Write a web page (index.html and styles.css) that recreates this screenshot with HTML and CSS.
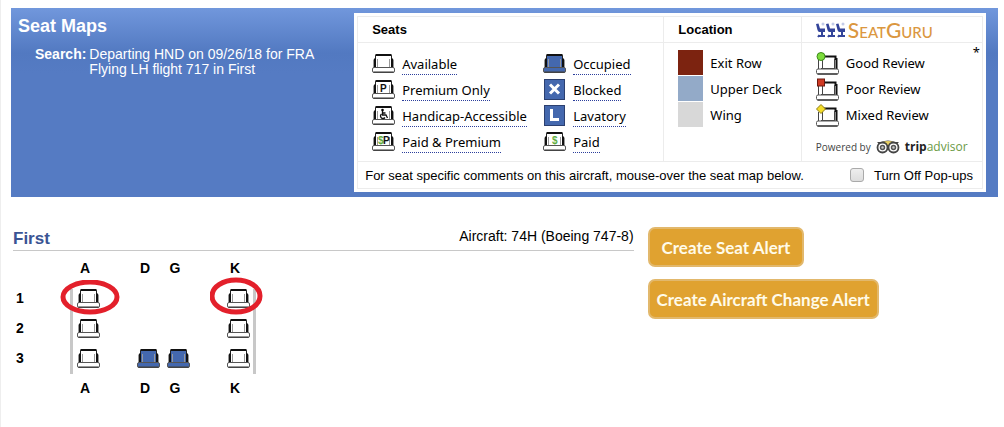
FILE: index.html
```html
<!DOCTYPE html>
<html lang="en">
<head>
  <meta charset="UTF-8">
  <meta name="viewport" content="width=device-width, initial-scale=1.0">
  <title>Seat Maps</title>
  <link rel="stylesheet" href="styles.css">
</head>
<body>
  <!-- shared icons -->
  <svg class="sprite" aria-hidden="true">
    <symbol id="seat" viewBox="0 0 23 19">
      <path d="M4 14V1h15v13z" fill="currentColor"/>
      <path d="M3.500 5V1.500H5M19.500 5V1.500H18" fill="none" stroke="#222"/>
      <path d="M3.500 1h16" stroke="#111" stroke-width="2"/>
      <path d="M5.500 5v8.500M17.500 5v8.500" stroke="#999" fill="none"/>
      <path d="M1.500 14V5.500M21.500 14V5.500" stroke="#999"/>
      <path d="M3 4.500V13M20 4.500V13" stroke="#111" stroke-width="2"/>
      <rect x=".5" y="13.500" width="22" height="5" rx="1.500" fill="currentColor" stroke="#555"/>
      <path d="M1.500 18.200h20" stroke="#444" stroke-width="1.500"/>
    </symbol>
    <symbol id="seat-review" viewBox="0 0 23 23">
      <path d="M5 4.500h14.500V7h1v10" fill="none" stroke="#111" stroke-width="2"/>
      <path d="M2.500 8v9M6.500 8v8.500M18.500 7v9.500M5 16.500h14" fill="none" stroke="#444"/>
      <rect x=".5" y="17" width="22" height="5" rx="1.500" fill="#fff" stroke="#555"/>
      <path d="M1.500 22h20" stroke="#444" stroke-width="1.500"/>
    </symbol>
    <symbol id="lounge-chair" viewBox="0 0 10 16">
      <circle cx="7" cy="2" r="1.500" fill="#c3cbe8"/>
      <path d="M0 2l2.500-.5L4 6.500h5V10H3.500Q2 10 1.500 8z" fill="#34459a"/>
      <path d="M6 9v4M3 14h6M2 15l1.500-2" stroke="#34459a" stroke-width="2" fill="none"/>
    </symbol>
  </svg>

  <div class="page">
    <header class="banner">
      <div class="search">
        <h1>Seat Maps</h1>
        <dl>
          <dt>Search:</dt>
          <dd>Departing HND on 09/26/18 for FRA<br>Flying LH flight 717 in First</dd>
        </dl>
      </div>

      <div class="legend">
        <table>
          <thead>
            <tr>
              <th class="col-seats">Seats</th>
              <th class="col-location">Location</th>
              <th class="col-reviews">
                <div class="seatguru">
                  <svg width="30" height="16" viewBox="0 0 30 16" aria-hidden="true">
                    <use href="#lounge-chair" width="10" height="16"/>
                    <use href="#lounge-chair" x="10" width="10" height="16"/>
                    <use href="#lounge-chair" x="20" width="10" height="16"/>
                  </svg>
                  <span>SeatGuru</span>
                </div>
              </th>
            </tr>
          </thead>
          <tbody>
            <tr>
              <td>
                <div class="seat-types">
                  <ul>
                    <li><svg class="icon"><use href="#seat"/></svg><a href="#available">Available</a></li>
                    <li><svg class="icon"><use href="#seat"/><text x="8" y="12" class="mark">P</text></svg><a href="#premium">Premium Only</a></li>
                    <li>
                      <svg class="icon"><use href="#seat"/>
                        <circle cx="10.500" cy="4" r="1.300"/>
                        <path d="M10.500 5v4h3.500l1.500 3M10.500 7h3M9.500 8a2.500 2.500 0 1 0 3.500 3.500" fill="none" stroke="#111" stroke-width="1.300"/>
                      </svg>
                      <a href="#handicap">Handicap-Accessible</a>
                    </li>
                    <li><svg class="icon"><use href="#seat"/><text x="6" y="12" class="mark paid">$</text><text x="11" y="12" class="mark">P</text></svg><a href="#paid-premium">Paid &amp; Premium</a></li>
                  </ul>
                  <ul>
                    <li><svg class="icon occupied"><use href="#seat"/></svg><a href="#occupied">Occupied</a></li>
                    <li>
                      <svg class="icon tile" viewBox="0 0 23 21"><rect x="1.500" y=".5" width="20" height="20" fill="#4468ae" stroke="#2c4070"/><path d="M7 5.500l9 9M16 5.500l-9 9" stroke="#fff" stroke-width="3"/></svg>
                      <a href="#blocked">Blocked</a>
                    </li>
                    <li>
                      <svg class="icon tile" viewBox="0 0 23 21"><rect x="1.500" y=".5" width="20" height="20" fill="#4468ae" stroke="#2c4070"/><path d="M8.500 4v10.500H16" fill="none" stroke="#fff" stroke-width="3"/></svg>
                      <a href="#lavatory">Lavatory</a>
                    </li>
                    <li><svg class="icon"><use href="#seat"/><text x="9" y="12" class="mark paid">$</text></svg><a href="#paid">Paid</a></li>
                  </ul>
                </div>
              </td>
              <td>
                <ul>
                  <li><span class="swatch exit"></span>Exit Row</li>
                  <li><span class="swatch upper"></span>Upper Deck</li>
                  <li><span class="swatch wing"></span>Wing</li>
                </ul>
              </td>
              <td class="reviews">
                <span class="note">*</span>
                <ul>
                  <li><svg class="icon review" viewBox="0 0 23 23"><use href="#seat-review"/><circle cx="5" cy="4.500" r="4" fill="#7ddc3c" stroke="#3c8a1c"/></svg>Good Review</li>
                  <li><svg class="icon review" viewBox="0 0 23 23"><use href="#seat-review"/><rect x="1.500" y="1" width="7" height="7" fill="#cf3a24" stroke="#6d1a10"/></svg>Poor Review</li>
                  <li><svg class="icon review" viewBox="0 0 23 23"><use href="#seat-review"/><path d="M5 .5L9.500 5 5 9.500.5 5z" fill="#f3dc2a" stroke="#8f7d14"/></svg>Mixed Review</li>
                </ul>
                <div class="powered">
                  Powered by
                  <svg width="24" height="14" viewBox="0 0 24 14" aria-hidden="true">
                    <path d="M1 2h4Q12-1 19 2h4l-2 2H3z" fill="#444"/>
                    <path d="M7 2q5-2 10 0l-5 5z" fill="#e8cf62"/>
                    <circle cx="6.500" cy="7.500" r="5" fill="#fff" stroke="#444" stroke-width="1.800"/>
                    <circle cx="17.500" cy="7.500" r="5" fill="#fff" stroke="#444" stroke-width="1.800"/>
                    <circle cx="6.500" cy="7.500" r="2" fill="#ccc" stroke="#555" stroke-width="1.500"/>
                    <circle cx="17.500" cy="7.500" r="2" fill="#ccc" stroke="#555" stroke-width="1.500"/>
                  </svg>
                  <span class="tripadvisor"><b>trip</b>advisor</span>
                </div>
              </td>
            </tr>
          </tbody>
          <tfoot>
            <tr>
              <td colspan="3">
                <div class="popups">
                  <span>For seat specific comments on this aircraft, mouse-over the seat map below.</span>
                  <label for="popups"><input type="checkbox" id="popups">Turn Off Pop-ups</label>
                </div>
              </td>
            </tr>
          </tfoot>
        </table>
      </div>
    </header>

    <main>
      <section class="cabin">
        <div class="cabin-head">
          <h2>First</h2>
          <span>Aircraft: 74H (Boeing 747-8)</span>
        </div>
        <table class="seat-map">
          <thead>
            <tr><td class="row-col"></td><th>A</th><td></td><th>D</th><th>G</th><td></td><th>K</th><td class="edge"></td></tr>
          </thead>
          <tbody>
            <tr>
              <th>1</th>
              <td class="wall-left">
                <svg class="icon"><use href="#seat"/></svg>
                <svg class="ring ring-a" viewBox="0 0 60 36"><ellipse cx="30" cy="17" rx="27" ry="15"/></svg>
              </td>
              <td></td><td></td><td></td><td></td>
              <td>
                <svg class="icon"><use href="#seat"/></svg>
                <svg class="ring ring-k" viewBox="0 0 53 38"><ellipse cx="26" cy="19" rx="24" ry="16"/></svg>
              </td>
              <td class="wall-right"></td>
            </tr>
            <tr>
              <th>2</th>
              <td class="wall-left"><svg class="icon"><use href="#seat"/></svg></td>
              <td></td><td></td><td></td><td></td>
              <td><svg class="icon"><use href="#seat"/></svg></td>
              <td class="wall-right"></td>
            </tr>
            <tr>
              <th>3</th>
              <td class="wall-left"><svg class="icon"><use href="#seat"/></svg></td>
              <td></td>
              <td><svg class="icon occupied"><use href="#seat"/></svg></td>
              <td><svg class="icon occupied"><use href="#seat"/></svg></td>
              <td></td>
              <td><svg class="icon"><use href="#seat"/></svg></td>
              <td class="wall-right"></td>
            </tr>
          </tbody>
          <tfoot>
            <tr><td></td><th>A</th><td></td><th>D</th><th>G</th><td></td><th>K</th><td></td></tr>
          </tfoot>
        </table>
      </section>

      <div class="actions">
        <button type="button" class="btn">Create Seat Alert</button>
        <button type="button" class="btn btn-wide">Create Aircraft Change Alert</button>
      </div>
    </main>
  </div>
</body>
</html>
```
FILE: styles.css
```css
:root {
  --line: #ececec;
  --seat-blue: #4468ae;
  --wall: #c8c8c8;
  --orange: #e0a230;
}

* {
  box-sizing: border-box;
  margin: 0;
  padding: 0;
}

body {
  font-family: "Liberation Sans", Arial, sans-serif;
  font-size: 14px;
  color: #000;
  background: #fff;
}

ul {
  list-style: none;
}

table {
  border-collapse: collapse;
}

.sprite {
  display: none;
}

.page {
  min-height: 100vh;
  padding: 8px 6px 0 10px;
  border-left: 1px solid #eee;
}

/* Banner */
.banner {
  display: flex;
  justify-content: space-between;
  padding: 5px 12px 5px 0;
  background: linear-gradient(#7197dc, #5279c1 45px, #557bc3 65px);
}

.search {
  padding-left: 7px;
  color: #fff;
}

h1 {
  font-size: 18px;
  line-height: 26px;
}

.search dl {
  display: flex;
  gap: 3px;
  margin: 8px 0 0 17px;
  line-height: 15px;
}

.search dt {
  font-weight: bold;
}

.legend {
  width: 64.8%;
  padding: 3px;
  background: #fff;
}

.legend table {
  width: 100%;
  table-layout: fixed;
}

.legend th,
.legend td {
  border: 1px solid var(--line);
  text-align: left;
  vertical-align: top;
}

.legend th {
  height: 26px;
  padding: 0 14px;
  font-size: 13px;
  vertical-align: middle;
}

.legend tbody td {
  height: 119px;
  padding: 7px 14px 0;
  font-family: "Noto Sans", Verdana, sans-serif;
  font-size: 13px;
}

.col-seats {
  width: 49%;
}

.col-location {
  width: 22%;
}

.legend li {
  display: flex;
  align-items: center;
  height: 26px;
  gap: 7px;
  white-space: nowrap;
}

.legend li a {
  color: inherit;
  text-decoration: none;
  line-height: 20px;
  margin-top: 3px;
  border-bottom: 1px dotted #2c3f9c;
}

.seat-types {
  display: grid;
  grid-template-columns: 171px 1fr;
}

.icon {
  display: block;
  flex: none;
  width: 23px;
  height: 19px;
  color: #fff;
}

.icon.tile {
  height: 21px;
}

.icon.review {
  height: 23px;
}

.icon.occupied {
  color: var(--seat-blue);
}

.mark {
  font: bold 10px "Liberation Sans", Arial, sans-serif;
  fill: #111;
}

.mark.paid {
  fill: #5fae3f;
}

.swatch {
  align-self: flex-start;
  width: 25px;
  height: 25px;
}

.swatch.exit {
  background: #7c2310;
}

.swatch.upper {
  background: #93aac8;
}

.swatch.wing {
  background: #d8d8d8;
}

.seatguru {
  display: flex;
  align-items: center;
  gap: 2px;
  color: #db9740;
  font: 500 21px/20px Lato, sans-serif;
  font-variant: small-caps;
}

.legend .reviews {
  position: relative;
}

.note {
  position: absolute;
  top: 0;
  right: 2px;
}

.powered {
  display: flex;
  align-items: center;
  gap: 5px;
  margin-top: 11px;
  color: #444;
  font: 10px/16px "Open Sans", sans-serif;
  white-space: nowrap;
}

.tripadvisor {
  color: #6a9a45;
  font: 12px/14px "Open Sans", sans-serif;
}

.tripadvisor b {
  color: #222;
}

.popups {
  display: flex;
  justify-content: space-between;
  align-items: center;
  height: 26px;
  padding: 0 9px 0 7px;
  font-size: 13px;
  white-space: nowrap;
}

.popups label {
  display: flex;
  align-items: center;
  gap: 10px;
}

.popups input {
  appearance: none;
  width: 14px;
  height: 14px;
  border: 1px solid #aaa;
  border-radius: 3px;
  background: linear-gradient(#eee, #ddd);
}

.popups input:checked {
  background: var(--seat-blue);
}

/* Cabin */
main {
  display: flex;
  gap: 14px;
  padding: 30px 0 0 2px;
}

.cabin {
  width: 63%;
}

.cabin-head {
  display: flex;
  justify-content: space-between;
  height: 24px;
  border-bottom: 1px solid var(--wall);
}

.cabin-head h2 {
  color: #3a5494;
  font-size: 17px;
  line-height: 24px;
}

.cabin-head span {
  line-height: 19px;
}

.seat-map {
  margin-top: 8px;
  table-layout: fixed;
  width: 243px;
  line-height: 18px;
}

.seat-map th,
.seat-map td {
  width: 30px;
  height: 30px;
  vertical-align: top;
}

.seat-map .row-col {
  width: 57px;
}

.seat-map .edge {
  width: 6px;
}

.seat-map tbody th {
  padding-left: 3px;
  text-align: left;
}

.seat-map tbody td {
  position: relative;
  padding-left: 7px;
}

.seat-map tbody tr:last-child > * {
  height: 25px;
}

.seat-map tfoot th {
  padding-top: 5px;
}

.seat-map .wall-left {
  background: linear-gradient(var(--wall), var(--wall)) left / 3px 100% no-repeat;
}

.seat-map .wall-right {
  padding: 0;
  background: linear-gradient(var(--wall), var(--wall)) right / 3px 100% no-repeat;
}

/* red markers laid over the seats */
.ring {
  position: absolute;
  z-index: 1;
  left: -10px;
  fill: none;
  stroke: #e3202b;
  stroke-width: 5px;
  pointer-events: none;
}

.ring-a {
  top: -9px;
  width: 60px;
  height: 36px;
}

.ring-k {
  top: -12px;
  width: 53px;
  height: 38px;
}

/* Alerts */
.actions {
  display: flex;
  flex-direction: column;
  align-items: flex-start;
  gap: 12px;
}

.btn {
  height: 40px;
  padding: 0 12px;
  border: 2px solid #e2b86c;
  border-radius: 7px;
  background: var(--orange);
  color: #fffbe9;
  font: bold 17px Lato, sans-serif;
  white-space: nowrap;
  cursor: pointer;
}

.btn-wide {
  padding: 0 7px;
}
```
